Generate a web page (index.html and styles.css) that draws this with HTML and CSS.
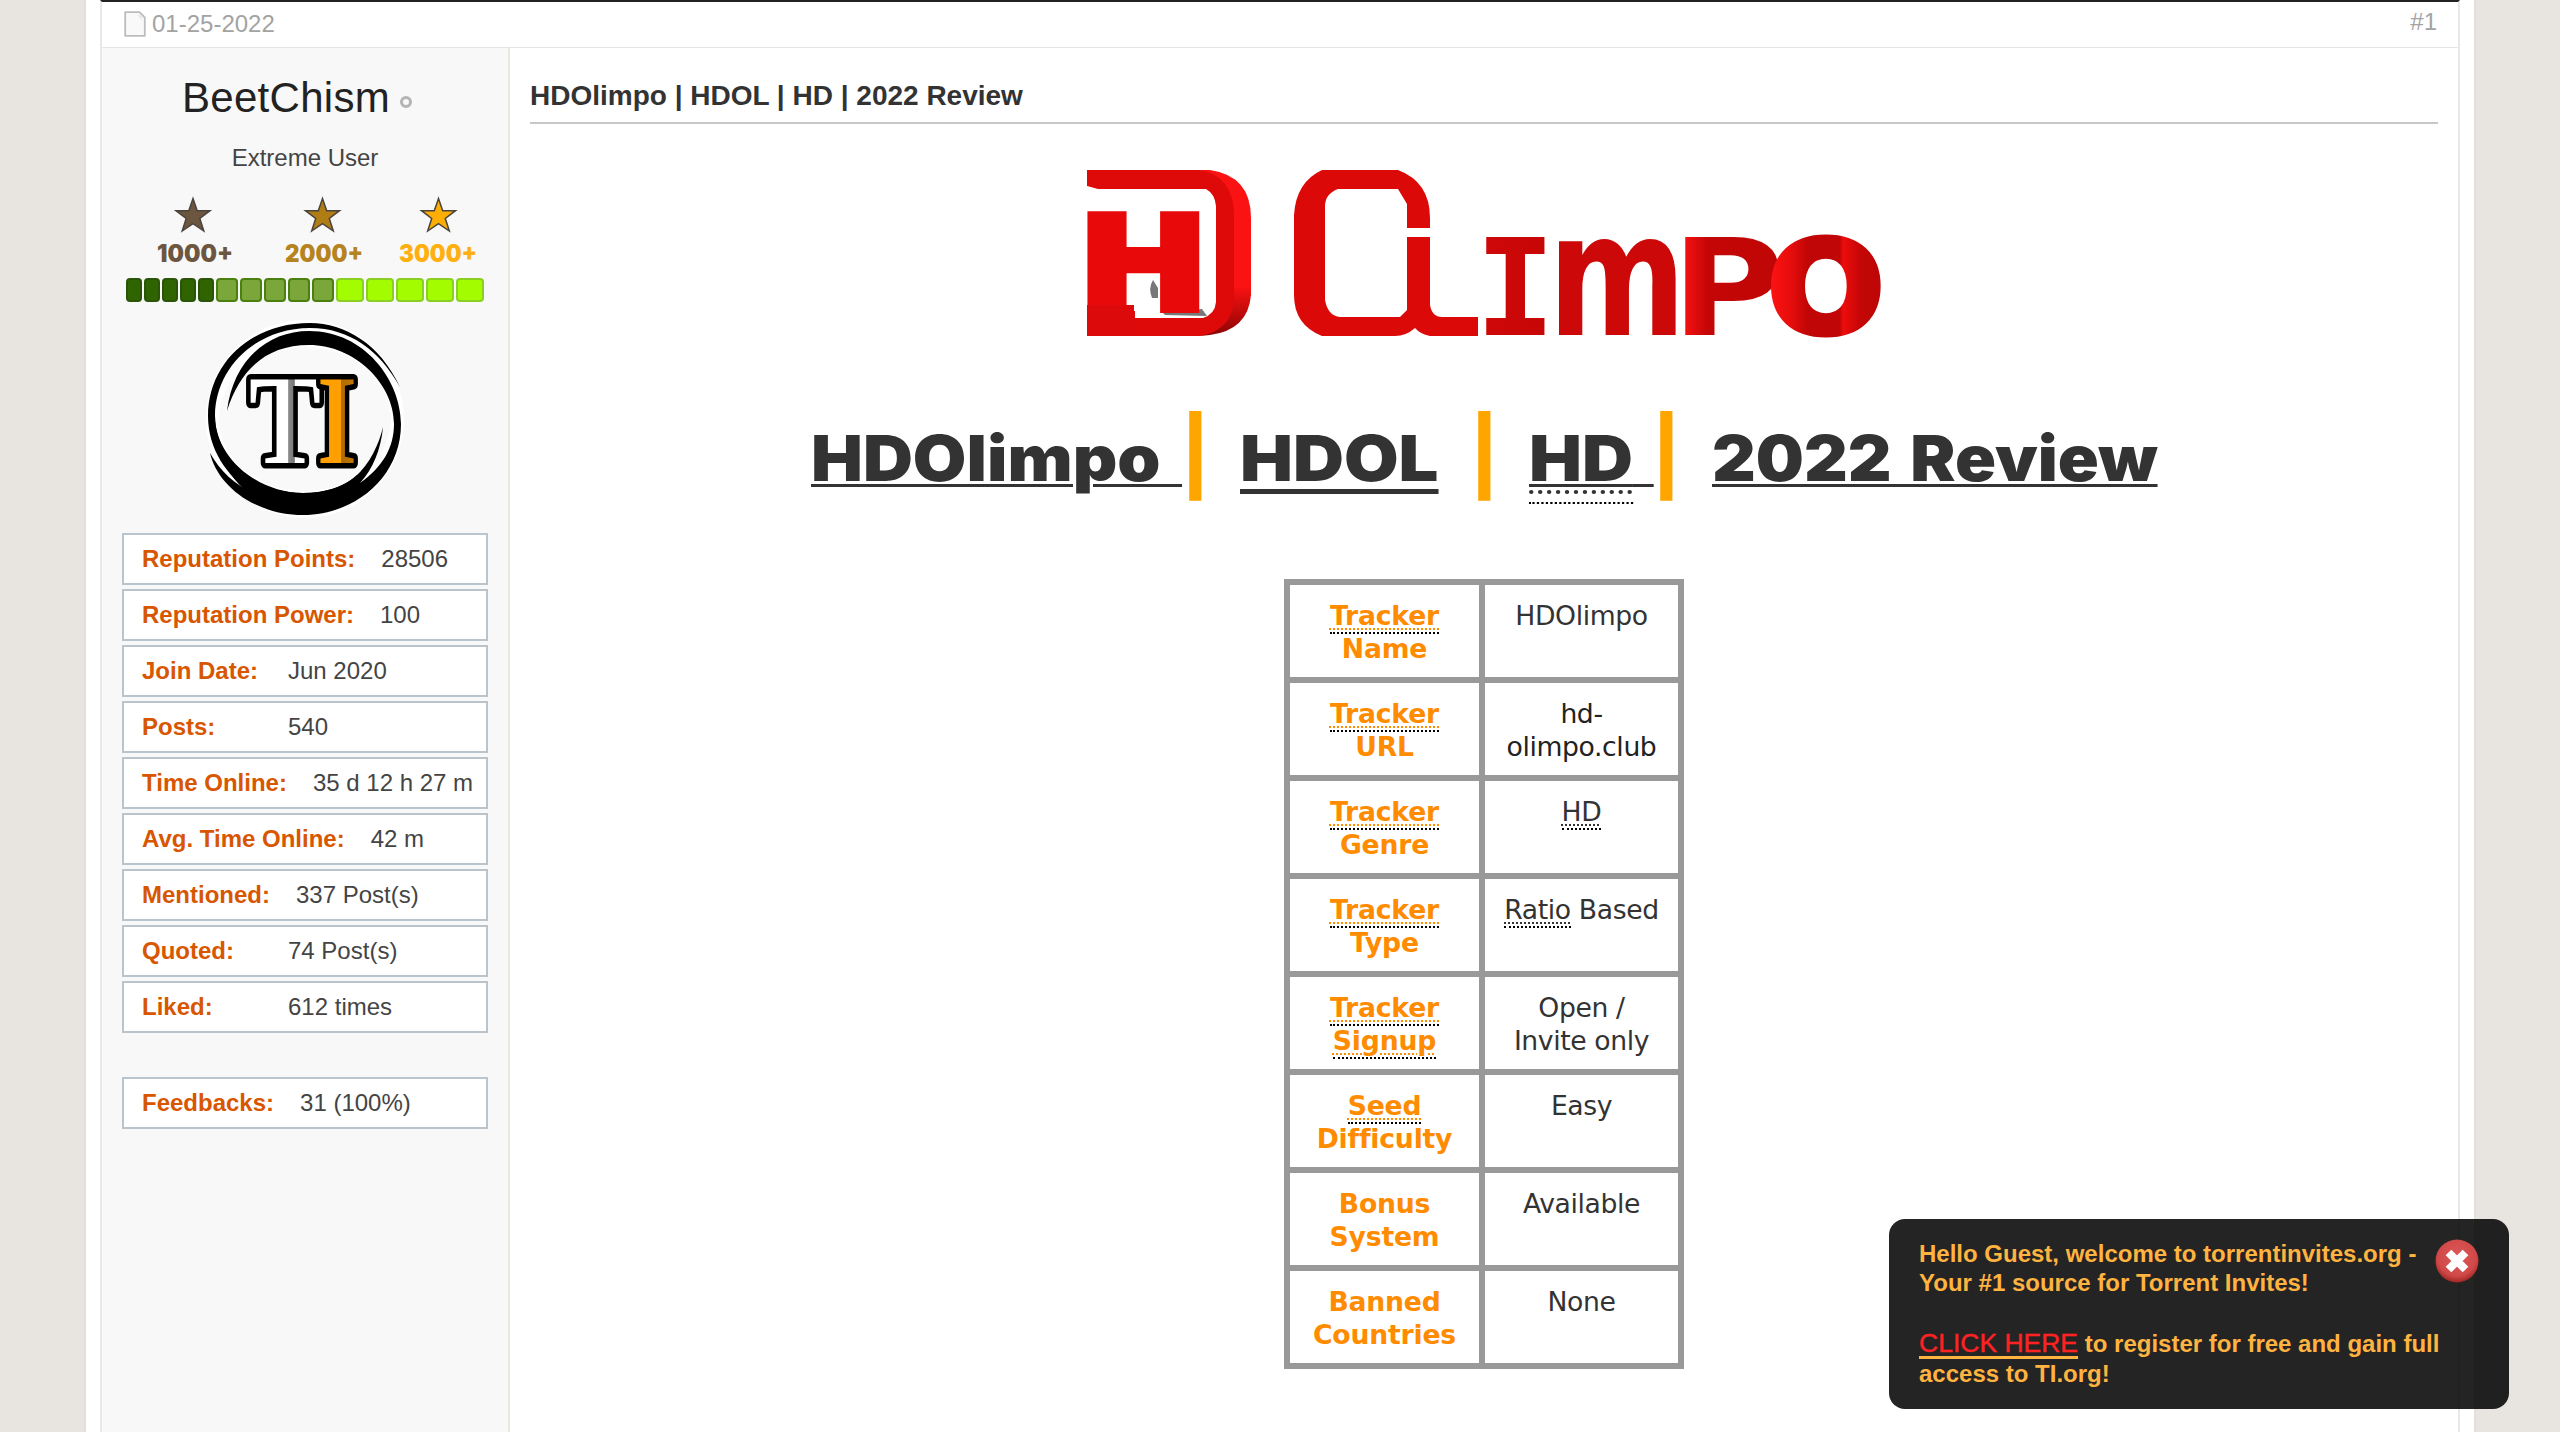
FILE: index.html
```html
<!DOCTYPE html>
<html lang="en">
<head>
<meta charset="utf-8">
<title>HDOlimpo | HDOL | HD | 2022 Review</title>
<link rel="stylesheet" href="styles.css">
</head>
<body>
<div class="page">
  <article class="post">
    <header class="post-head">
      <span class="post-date">
        <svg class="doc-icon" width="22" height="26" viewBox="0 0 22 26"><path d="M1.2 1.2H15.500L20.800 6.500V24.800H1.200Z" fill="#f9f9f9" stroke="#bdbdbd" stroke-width="1.800" stroke-linejoin="round"/><path d="M13 4L18 9V5.500L15.500 3.500Z" fill="#e9e9e9"/></svg>
        01-25-2022
      </span>
      <a class="post-number">#1</a>
    </header>
    <div class="post-body">
      <aside class="user">
        <div class="user-name">BeetChism<span class="offline"></span></div>
        <div class="user-title">Extreme User</div>
        <svg class="medals" width="366" height="80" viewBox="122 194 366 80">
          <defs><path id="star" d="M0-17.500L4.200-5.300L17-5.300L6.800 2.500L10.800 15L0 7.600L-10.800 15L-6.800 2.500L-17-5.300L-4.200-5.300Z" stroke="#4a443c" stroke-width="1.500"/></defs>
          <use href="#star" x="193" y="216" fill="#6d5640"/>
          <use href="#star" x="322.500" y="216" fill="#b07c14"/>
          <use href="#star" x="438.500" y="216" fill="#fdae06"/>
          <text x="157" y="262" textLength="76" lengthAdjust="spacingAndGlyphs" fill="#6d5640">1000+</text>
          <text x="285" y="262" textLength="78" lengthAdjust="spacingAndGlyphs" fill="#b58320">2000+</text>
          <text x="399" y="262" textLength="78" lengthAdjust="spacingAndGlyphs" fill="#ffb010">3000+</text>
        </svg>
        <div class="rep-bar">
          <i class="pip dark"></i><i class="pip dark"></i><i class="pip dark"></i><i class="pip dark"></i><i class="pip dark"></i>
          <i class="pip mid"></i><i class="pip mid"></i><i class="pip mid"></i><i class="pip mid"></i><i class="pip mid"></i>
          <i class="pip light"></i><i class="pip light"></i><i class="pip light"></i><i class="pip light"></i><i class="pip light"></i>
        </div>
        <svg class="avatar" width="200" height="200" viewBox="0 0 200 200">
          <circle cx="100" cy="100" r="99" fill="#fff"/>
          <ellipse cx="100" cy="100" rx="86" ry="72" fill="#f9f9f9"/>
          <path d="M195 68C175 25 140 4 105 4C45 4 3 45 3 97C3 130 22 158 48 174L98 174C50 174 10 140 10 97C10 50 50 9 105 9C145 9 175 32 195 68Z"/>
          <path d="M22 92C28 42 62 12 104 12C160 12 196 62 196 105C196 158 150 196 98 196C48 196 12 165 5 134C15 152 30 166 50 175L98 174C120 174 138 168 150 158C165 145 174 125 178 108C176 130 168 150 155 164C178 148 189 128 189 105C189 65 150 26 104 26C62 26 35 50 22 92Z"/>
          <path d="M10 97C10 138 52 174 98 174C122 174 140 167 152 156L150 178L98 190L46 176C20 155 6 128 10 97Z"/>
          <g class="avatar-letters">
            <text x="44" y="144" textLength="72" lengthAdjust="spacingAndGlyphs" fill="url(#silver)">T</text>
            <text x="112" y="144" textLength="40" lengthAdjust="spacingAndGlyphs" fill="url(#gold)">I</text>
          </g>
          <defs>
            <linearGradient id="silver"><stop offset=".54" stop-color="#fff"/><stop offset=".55" stop-color="#8a8a8a"/><stop offset=".63" stop-color="#777"/><stop offset=".64" stop-color="#fff"/></linearGradient>
            <linearGradient id="gold"><stop offset=".6" stop-color="#ff9f00"/><stop offset=".61" stop-color="#b06c00"/><stop offset="1" stop-color="#c87a00"/></linearGradient>
          </defs>
        </svg>
        <dl class="stats">
          <div class="stat"><dt>Reputation Points:</dt><dd>28506</dd></div>
          <div class="stat"><dt>Reputation Power:</dt><dd>100</dd></div>
          <div class="stat"><dt>Join Date:</dt><dd>Jun 2020</dd></div>
          <div class="stat"><dt>Posts:</dt><dd>540</dd></div>
          <div class="stat"><dt>Time Online:</dt><dd>35 d 12 h 27 m</dd></div>
          <div class="stat"><dt>Avg. Time Online:</dt><dd>42 m</dd></div>
          <div class="stat"><dt>Mentioned:</dt><dd>337 Post(s)</dd></div>
          <div class="stat"><dt>Quoted:</dt><dd>74 Post(s)</dd></div>
          <div class="stat"><dt>Liked:</dt><dd>612 times</dd></div>
          <div class="stat feedback"><dt>Feedbacks:</dt><dd>31 (100%)</dd></div>
        </dl>
      </aside>
      <section class="content">
        <h2 class="post-title">HDOlimpo | HDOL | HD | 2022 Review</h2>
        <svg class="logo" width="850" height="220" viewBox="0 0 850 220">
          <defs>
            <linearGradient id="redI"><stop offset="0" stop-color="#d00808"/><stop offset="1" stop-color="#c60606"/></linearGradient>
            <linearGradient id="redP"><stop offset=".1" stop-color="#fa1212"/><stop offset=".32" stop-color="#c40606"/><stop offset="1" stop-color="#c00606"/></linearGradient>
            <linearGradient id="redO"><stop offset="0" stop-color="#ff1414"/><stop offset=".2" stop-color="#e60c0c"/><stop offset=".34" stop-color="#c00606"/><stop offset=".62" stop-color="#c00606"/><stop offset=".65" stop-color="#ee0c0c"/><stop offset=".8" stop-color="#c40606"/><stop offset="1" stop-color="#bc0606"/></linearGradient>
            <linearGradient id="side" x1="0" y1="0" x2="0" y2="1"><stop offset=".7" stop-color="#fb1212"/><stop offset="1" stop-color="#8c0404"/></linearGradient>
          </defs>
          <path d="M140 30H150Q191 36 191 78V155Q188 190 150 195L140 196Q168 182 168 155V72Q168 46 140 30Z" fill="url(#side)"/>
          <path d="M27 30H140Q172 36 174 72V160Q172 190 140 196H27V171H75V178H143Q155 174 156 162V66Q155 54 146 49H38L27 46Z" fill="#de0a0a"/>
          <path d="M93 140L98 148V158L92 158Q88 148 93 140Z M103 173L142 169L147 176L105 175Z" fill="#777"/>
          <text class="wide" transform="translate(18 169) scale(1.220 1)" font-size="128" fill="#e80a0a" stroke="#e80a0a" stroke-width="8">H</text>
          <path d="M27 165H74V196H27Z" fill="#dc0a0a"/>
          <path d="M262 30H338Q370 42 370 78V88H347V64L338 49H278Q265 54 265 66V160Q268 176 280 177H340L347 170V97H370V165Q372 177 382 177H418V196H370Q360 194 355 188Q346 196 335 196H262Q234 185 234 155V75Q236 42 262 30Z" fill="#dc0909"/>
          <text class="mono" transform="translate(415 195)" font-size="134" fill="url(#redI)">I</text>
          <text class="wide" transform="translate(488 195) scale(.770 1)" font-size="172" fill="#cc0808">m</text>
          <text class="wide" transform="translate(611 195) scale(1.160 1)" font-size="134" fill="url(#redP)">P</text>
          <text class="wide" transform="translate(708 192) scale(1.080 1)" font-size="126" fill="url(#redO)" stroke="url(#redO)" stroke-width="7">O</text>
        </svg>
        <h1 class="headline"><span class="w1">HDOlimpo </span><b>|</b><span class="w2">HDOL</span><b>|</b><span class="w3"><abbr>HD</abbr> </span><b>|</b><span class="w4">2022 Review</span></h1>
        <table class="info">
          <tr><th><abbr>Tracker</abbr><br>Name</th><td>HDOlimpo</td></tr>
          <tr><th><abbr>Tracker</abbr><br>URL</th><td class="link">hd-<br>olimpo.club</td></tr>
          <tr><th><abbr>Tracker</abbr><br>Genre</th><td><abbr>HD</abbr></td></tr>
          <tr><th><abbr>Tracker</abbr><br>Type</th><td><abbr>Ratio</abbr> Based</td></tr>
          <tr><th><abbr>Tracker</abbr><br><abbr>Signup</abbr></th><td>Open /<br>Invite only</td></tr>
          <tr><th><abbr>Seed</abbr><br>Difficulty</th><td>Easy</td></tr>
          <tr><th>Bonus<br>System</th><td>Available</td></tr>
          <tr><th>Banned<br>Countries</th><td>None</td></tr>
        </table>
      </section>
    </div>
  </article>
</div>
<div class="welcome">
  <div class="welcome-text">
    <p class="hello">Hello Guest, welcome to torrentinvites.org -<br>Your #1 source for Torrent Invites!</p>
    <p class="register"><a>CLICK HERE</a> to register for free and gain full<br>access to TI.org!</p>
  </div>
  <svg class="close" width="44" height="44" viewBox="0 0 44 44">
    <defs><radialGradient id="ball" cx=".5" cy=".4" r=".6"><stop offset="0" stop-color="#e05a5a"/><stop offset=".75" stop-color="#d04848"/><stop offset="1" stop-color="#a02626"/></radialGradient></defs>
    <circle cx="22" cy="22" r="21.500" fill="url(#ball)"/>
    <path d="M13.500 13.500L30.500 30.500M30.500 13.500L13.500 30.500" stroke="#fff" stroke-width="8"/>
  </svg>
</div>
</body>
</html>
```
FILE: styles.css
```css
* { box-sizing: border-box; }
body {
  margin: 0;
  height: 1432px;
  overflow: hidden;
  background: #e8e4df;
  color: #444;
  font: 24px/1.15 "Liberation Sans", Arial, sans-serif;
}
.page {
  width: 2392px;
  height: 1432px;
  margin: 0 auto;
  padding: 0 14px;
  border: solid #e2dfdc;
  border-width: 0 2px;
  background: #fff;
}
.post {
  display: flex;
  flex-direction: column;
  height: 100%;
  border: 2px solid #ebe7e4;
  border-top-color: #222;
  border-bottom: 0;
}
.post-head {
  display: flex;
  justify-content: space-between;
  height: 46px;
  padding: 8px 21px 0 22px;
  border-bottom: 1px solid #e4e4e4;
  color: #a3a3a3;
}
.post-date { display: flex; gap: 6px; }
.doc-icon { margin-top: 1px; }
.post-number { margin-top: -2px; }
.post-body { display: flex; flex: 1; }

.user {
  width: 408px;
  padding: 0 20px;
  border-right: 2px solid #ebe8e2;
  background: #f8f8f8;
  text-align: center;
}
.user-name {
  margin: 26px 20px 0 0;
  font-size: 42px;
  line-height: 48px;
  letter-spacing: .3px;
  color: #222;
}
.offline {
  display: inline-block;
  width: 12px;
  height: 12px;
  margin-left: 10px;
  margin-right: -4px;
  vertical-align: 4px;
  border: 3px solid #b4b4b4;
  border-radius: 50%;
}
.user-title { margin-top: 22px; line-height: 28px; }
.medals { display: block; margin-top: 22px; }
.medals text { font: 900 24px Inter, sans-serif; stroke: none; }
.rep-bar { display: flex; gap: 2px; padding-left: 4px; margin-top: 4px; }
.pip { height: 24px; border: 2px solid; border-radius: 4px; }
.dark { width: 16px; background: #2f6400; border-color: #2a5508; }
.mid { width: 22px; background: #7ba639; border-color: #4b8010; }
.light { width: 28px; background: #a4fc00; border-color: #8bcf25; }
.avatar { display: block; margin: 17px 0 0 83px; }
.avatar-letters text {
  font: bold 128px "Liberation Serif", serif;
  stroke: #000;
  stroke-width: 11px;
  stroke-linejoin: round;
  paint-order: stroke;
}
.stats { margin: 14px 0 0; display: flex; flex-direction: column; gap: 4px; }
.stat {
  display: flex;
  align-items: center;
  gap: 26px;
  height: 52px;
  padding-left: 18px;
  border: 2px solid #b9c4cd;
  background: #fff;
  white-space: nowrap;
}
.stat dt { min-width: 120px; text-align: left; font-weight: bold; color: #d85600; }
.stat dd { margin: 0; }
.feedback { margin-top: 40px; }

.content { flex: 1; padding: 0 20px; }
.post-title {
  height: 76px;
  margin: 0;
  padding-top: 32px;
  border-bottom: 2px solid #c8c8c8;
  font-size: 28px;
  line-height: 32px;
  color: #333;
}
.logo { display: block; margin: 16px 0 0 530px; }
.logo .wide { font-family: "DejaVu Sans", sans-serif; font-weight: bold; }
.logo .mono { font-family: "DejaVu Sans Mono", monospace; font-weight: bold; }
.headline {
  display: flex;
  align-items: baseline;
  height: 110px;
  margin: 32px 0 0 281px;
  font: 900 63px/110px Inter, sans-serif;
  color: #333;
  white-space: pre;
}
.headline span {
  transform: translateY(1px) scaleX(1.12);
  transform-origin: left;
  text-decoration: underline 3px;
  text-underline-offset: 3px;
}
.headline b { width: 27px; font: bold 95px/110px "Liberation Sans", sans-serif; color: #ffa500; }
.w1 { width: 371px; word-spacing: 7px; }
.headline .w1 { transform: translateY(1px) scaleX(1.098); }
.w2 { width: 199px; margin-left: 31px; }
.headline .w2 { text-decoration-thickness: 5px; text-underline-offset: 8px; }
.w2 + b { margin-left: 32px; }
.w3 { width: 124px; margin-left: 31px; word-spacing: 6px; }
.w4 { margin-left: 32px; word-spacing: 5px; }
.headline .w4 { transform: translateY(1px) scaleX(1.075); }
abbr { text-decoration: underline dotted 2px; border-bottom: 2px dotted #000; }
.headline abbr { text-decoration-thickness: 4px; text-underline-offset: 9px; padding-bottom: 6px; }

.info {
  width: 400px;
  margin: 77px auto 0;
  table-layout: fixed;
  border-spacing: 6px;
  background: #999;
  font: 26.67px/33px "DejaVu Sans", Verdana, sans-serif;
  letter-spacing: -.4px;
  color: #333;
  text-align: center;
}
.info th, .info td { height: 92px; padding: 14px 0 0; background: #fff; vertical-align: top; }
.info th { width: 189px; color: #ff8c00; letter-spacing: -.2px; }
.info .link { color: #222; }
.info abbr { text-underline-offset: 3px; padding-bottom: 1px; }

.welcome {
  position: absolute;
  left: 1889px;
  top: 1219px;
  display: flex;
  width: 620px;
  height: 190px;
  padding: 20px 30px;
  border-radius: 16px;
  background: rgba(0, 0, 0, .86);
  color: #ffb340;
  font-weight: bold;
  white-space: nowrap;
}
.welcome-text { width: 516px; }
.welcome p { margin: 0; line-height: 30px; }
.welcome .hello { line-height: 29px; }
.welcome .register { margin-top: 31px; }
.register a {
  font-size: 26.5px;
  font-weight: normal;
  color: #ff2222;
  -webkit-text-stroke: .4px #ff2222;
  text-decoration: underline 3px #ffb340;
  text-underline-offset: 4px;
}
```
